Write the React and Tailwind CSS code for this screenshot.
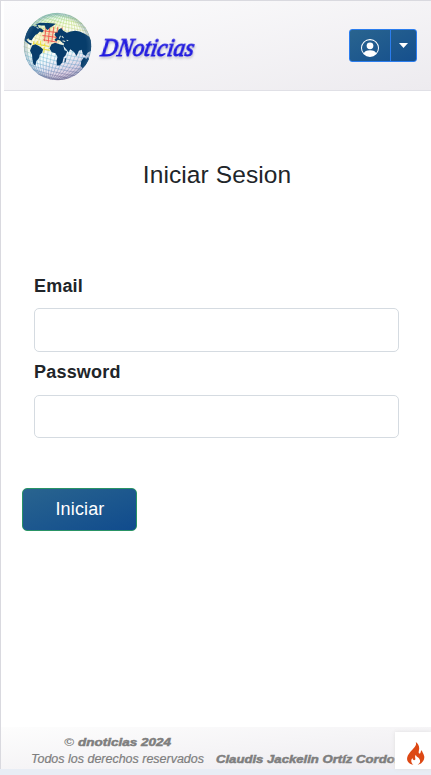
import React from 'react';

const meridians = [-98, -89, -79, -69, -58, -47, -36, -24, -12, 0, 12, 24, 36, 47, 58, 69, 79, 89, 98];

function Globe() {
  return (
    <svg className="mt-[2px] h-[69px] w-[69px] shrink-0" viewBox="71 38 204 206" aria-label="Globo">
      <defs>
        <linearGradient id="lines" gradientUnits="userSpaceOnUse" x1="110" y1="45" x2="190" y2="244">
          <stop offset="0" stopColor="#6cc9b0" />
          <stop offset=".2" stopColor="#b5dc72" />
          <stop offset=".45" stopColor="#d8d49a" />
          <stop offset=".62" stopColor="#7cc6d8" />
          <stop offset=".82" stopColor="#6c9cc8" />
          <stop offset="1" stopColor="#80507f" />
        </linearGradient>
        <linearGradient id="ocean" x1="0.2" y1="0" x2=".6" y2="1">
          <stop offset="0" stopColor="#cdeedd" />
          <stop offset=".3" stopColor="#fcfdf2" />
          <stop offset=".65" stopColor="#f4fafd" />
          <stop offset="1" stopColor="#d3c2da" />
        </linearGradient>
        <radialGradient id="rim">
          <stop offset=".85" stopColor="#416e93" stopOpacity="0" />
          <stop offset="1" stopColor="#416e93" stopOpacity=".4" />
        </radialGradient>
        <radialGradient id="warm">
          <stop offset="0" stopColor="#ff6a50" stopOpacity=".35" />
          <stop offset=".5" stopColor="#ffd45a" stopOpacity=".25" />
          <stop offset="1" stopColor="#fff04a" stopOpacity="0" />
        </radialGradient>
        <clipPath id="ball"><circle cx="173" cy="141" r="101" /></clipPath>
      </defs>
      <g clipPath="url(#ball)">
        <circle cx="173" cy="141" r="101" fill="url(#ocean)" />
        <circle cx="150" cy="110" r="55" fill="url(#warm)" />
        <g stroke="url(#lines)" strokeWidth="1.4" fill="none" transform="rotate(14 173 141)">
          {meridians.map((x) => (
            <path key={x} d={`M${173 + x * 0.3} 38 C${173 + x * 1.25} 85 ${173 + x * 1.25} 197 ${173 + x * 0.3 + 0.1} 244`} />
          ))}
          {meridians.map((y) => (
            <path key={y} d={`M70 ${141 + y} Q173 ${155 + y} 276 ${140.9 + y}`} />
          ))}
        </g>
        <path d="M139 82L134 125M150 80L145 132M162 82L156 128M174 82L168 120M187 84L182 112M130 94L190 102M128 108L186 116M130 121L172 128" stroke="#f04a42" strokeWidth="2.4" fill="none" />
        <path d="M102 126L99 148M113 124L109 146M123 124L120 158M134 132L132 160M99 132L148 141M101 145L150 152" stroke="#eedf3b" strokeWidth="3" fill="none" />
        <g fill="#073d6b">
          <path d="M74 116 L79 99 89 84 99 78 106 82 114 76 117 85 125 87 132 94 127 99 120 96 113 104 108 106 101 114 96 122 89 121 86 116 80 121 87 128 97 133 93 137 82 130 75 124Z" />
          <path d="M106 75 L121 70 146 71 168 73 159 80 150 85 144 92 138 87 135 78 124 78Z" />
          <path d="M97 138 L107 134 116 139 124 144 130 150 127 160 120 166 118 175 110 184 107 198 101 194 98 180 97 166 91 154Z" />
          <path d="M164 106 L168 98 172 101 176 91 184 86 190 94 201 100 212 96 226 94 239 96 254 103 268 112 276 129 273 154 263 160 257 169 249 164 245 151 237 154 230 169 223 158 211 149 206 158 198 148 190 139 193 133 187 129 181 123 174 121 169 126 164 121 171 115Z" />
          <path d="M155 134 L166 130 179 134 190 137 194 152 202 156 197 168 191 174 188 188 180 197 172 198 170 184 173 172 167 161 156 158 149 147Z" />
          <path d="M244 184 L252 173 259 178 264 172 268 181 258 196 248 206 242 199Z" />
          <path d="M195 178 l4 -4 -2 13 -4 2Z" />
        </g>
        <path d="M182 109l-4 9m8-8l5 5M188 124l8 2m4-4l5 2M110 82l6 6m4-7l6 3" stroke="#d9e4da" strokeWidth="3" />
        <circle cx="173" cy="141" r="101" fill="url(#rim)" />
      </g>
    </svg>
  );
}

function UserMenu() {
  return (
    <div className="flex h-[33px] w-[68px] overflow-hidden rounded-[3px] border border-[#2b7dee] bg-linear-to-br from-[#29648f] to-[#154f8d]">
      <button className="flex w-[41px] items-center justify-center border-r border-[#2b7dee] pt-1" aria-label="Usuario">
        <svg className="h-[18px] w-[18px]" viewBox="0 0 16 16" fill="#fff">
          <path d="M11 6a3 3 0 1 1-6 0 3 3 0 0 1 6 0z" />
          <path fillRule="evenodd" d="M0 8a8 8 0 1 1 16 0A8 8 0 0 1 0 8zm8-7a7 7 0 0 0-5.468 11.37C3.242 11.226 4.805 10 8 10s4.757 1.225 5.468 2.37A7 7 0 0 0 8 1z" />
        </svg>
      </button>
      <button className="flex flex-1 items-center justify-center" aria-label="Opciones">
        <svg className="h-[5px] w-[9px]" viewBox="0 0 9 5"><path d="M0 0h9L4.5 5z" fill="#fff" /></svg>
      </button>
    </div>
  );
}

function Field({ label, type }) {
  return (
    <label className="block h-[86.5px] text-[18px] leading-[27px] font-bold tracking-[0.2px] text-[#212529]">
      <span className="relative top-[0.5px]">{label}</span>
      <input type={type} className="mt-[9px] block h-[43.5px] w-full rounded-[5px] border border-[#d5dbe1] bg-white px-3 font-normal outline-none" />
    </label>
  );
}

export default function App() {
  return (
    <div className="flex h-[775px] w-[431px] flex-col overflow-hidden bg-[#e8edf5] font-['Liberation_Sans',Arial,sans-serif]">
      <div className="relative flex h-[769px] flex-col border-t border-l border-[#d9d9df] bg-white">
        <header className="ml-[3px] flex h-[90px] shrink-0 items-center border-b border-[#e0e0e6] bg-linear-to-br from-[#fcfcfd] to-[#edebef] pr-[14px] pl-[19px]">
          <Globe />
          <svg className="ml-[5px] h-[40px] w-[106px] overflow-visible" viewBox="0 0 106 40">
            <text
              transform="translate(3 30) skewX(-10)"
              textLength="93"
              lengthAdjust="spacingAndGlyphs"
              className="fill-[#211be0] stroke-[#211be0] stroke-[1px] font-['Liberation_Serif',serif] text-[25px] italic drop-shadow-[1px_2px_1px_#c5c5d0]"
            >
              DNoticias
            </text>
          </svg>
          <div className="ml-auto"><UserMenu /></div>
        </header>

        <main className="flex flex-1 flex-col">
          <h1 className="mt-[67px] h-[32px] pl-[2px] text-center text-[24.5px] leading-[33px] tracking-[0.1px] text-[#212529]">
            Iniciar Sesion
          </h1>
          <form className="mt-[82px] pr-[32px] pl-[33px]" onSubmit={(e) => e.preventDefault()}>
            <Field label="Email" type="email" />
            <Field label="Password" type="password" />
            <button className="mt-[42.5px] -ml-[12px] block h-[43.5px] w-[115px] rounded-[5px] border border-[#299365] bg-linear-to-br from-[#29648f] to-[#104b8d] pt-px pl-px text-[18px] tracking-[0.15px] text-white">
              Iniciar
            </button>
          </form>
        </main>

        <footer className="h-[42px] shrink-0 bg-linear-to-br from-[#fdfdfd] to-[#eeecf0] pt-[7px] italic">
          <svg className="block h-[35px] w-[430px]" viewBox="0 0 430 35">
            <g fill="#7e7e7e">
              <text x="63" y="12" textLength="10" lengthAdjust="spacingAndGlyphs" className="text-[11px] font-bold">©</text>
              <text x="77" y="12" textLength="93" lengthAdjust="spacingAndGlyphs" className="stroke-[#7e7e7e] stroke-[0.5px] text-[11px] font-bold">dnoticias 2024</text>
              <text x="30" y="29" textLength="173" lengthAdjust="spacingAndGlyphs" className="stroke-[#7e7e7e] stroke-[0.2px] text-[12.5px]">Todos los derechos reservados</text>
              <text x="215" y="29" textLength="194" lengthAdjust="spacingAndGlyphs" className="stroke-[#7e7e7e] stroke-[0.5px] text-[11px] font-bold">Claudis Jackelin Ortíz Cordoba</text>
            </g>
          </svg>
        </footer>
        <div className="absolute right-0 bottom-0 flex h-[37px] w-[36px] items-center justify-center bg-white pt-[5px] pl-[4px] shadow-[0_0_4px_#e0e0e0]">
          <svg className="h-[23px] w-[19px]" viewBox="0 0 57 70" fill="#dd4814">
            <path d="M29 0C34 11 22 19 12 31C2 43-1 55 9 64C13 68 18 69 22 69C15 64 13 56 19 49C20 54 23 56 26 55C32 52 23 46 30 39C30 46 36 45 40 51C45 59 42 65 35 69C50 66 57 54 55 43C53 34 48 31 48 25C43 27 45 34 42 35C37 36 38 30 39 25C42 14 36 4 29 0Z" />
          </svg>
        </div>
      </div>
    </div>
  );
}
